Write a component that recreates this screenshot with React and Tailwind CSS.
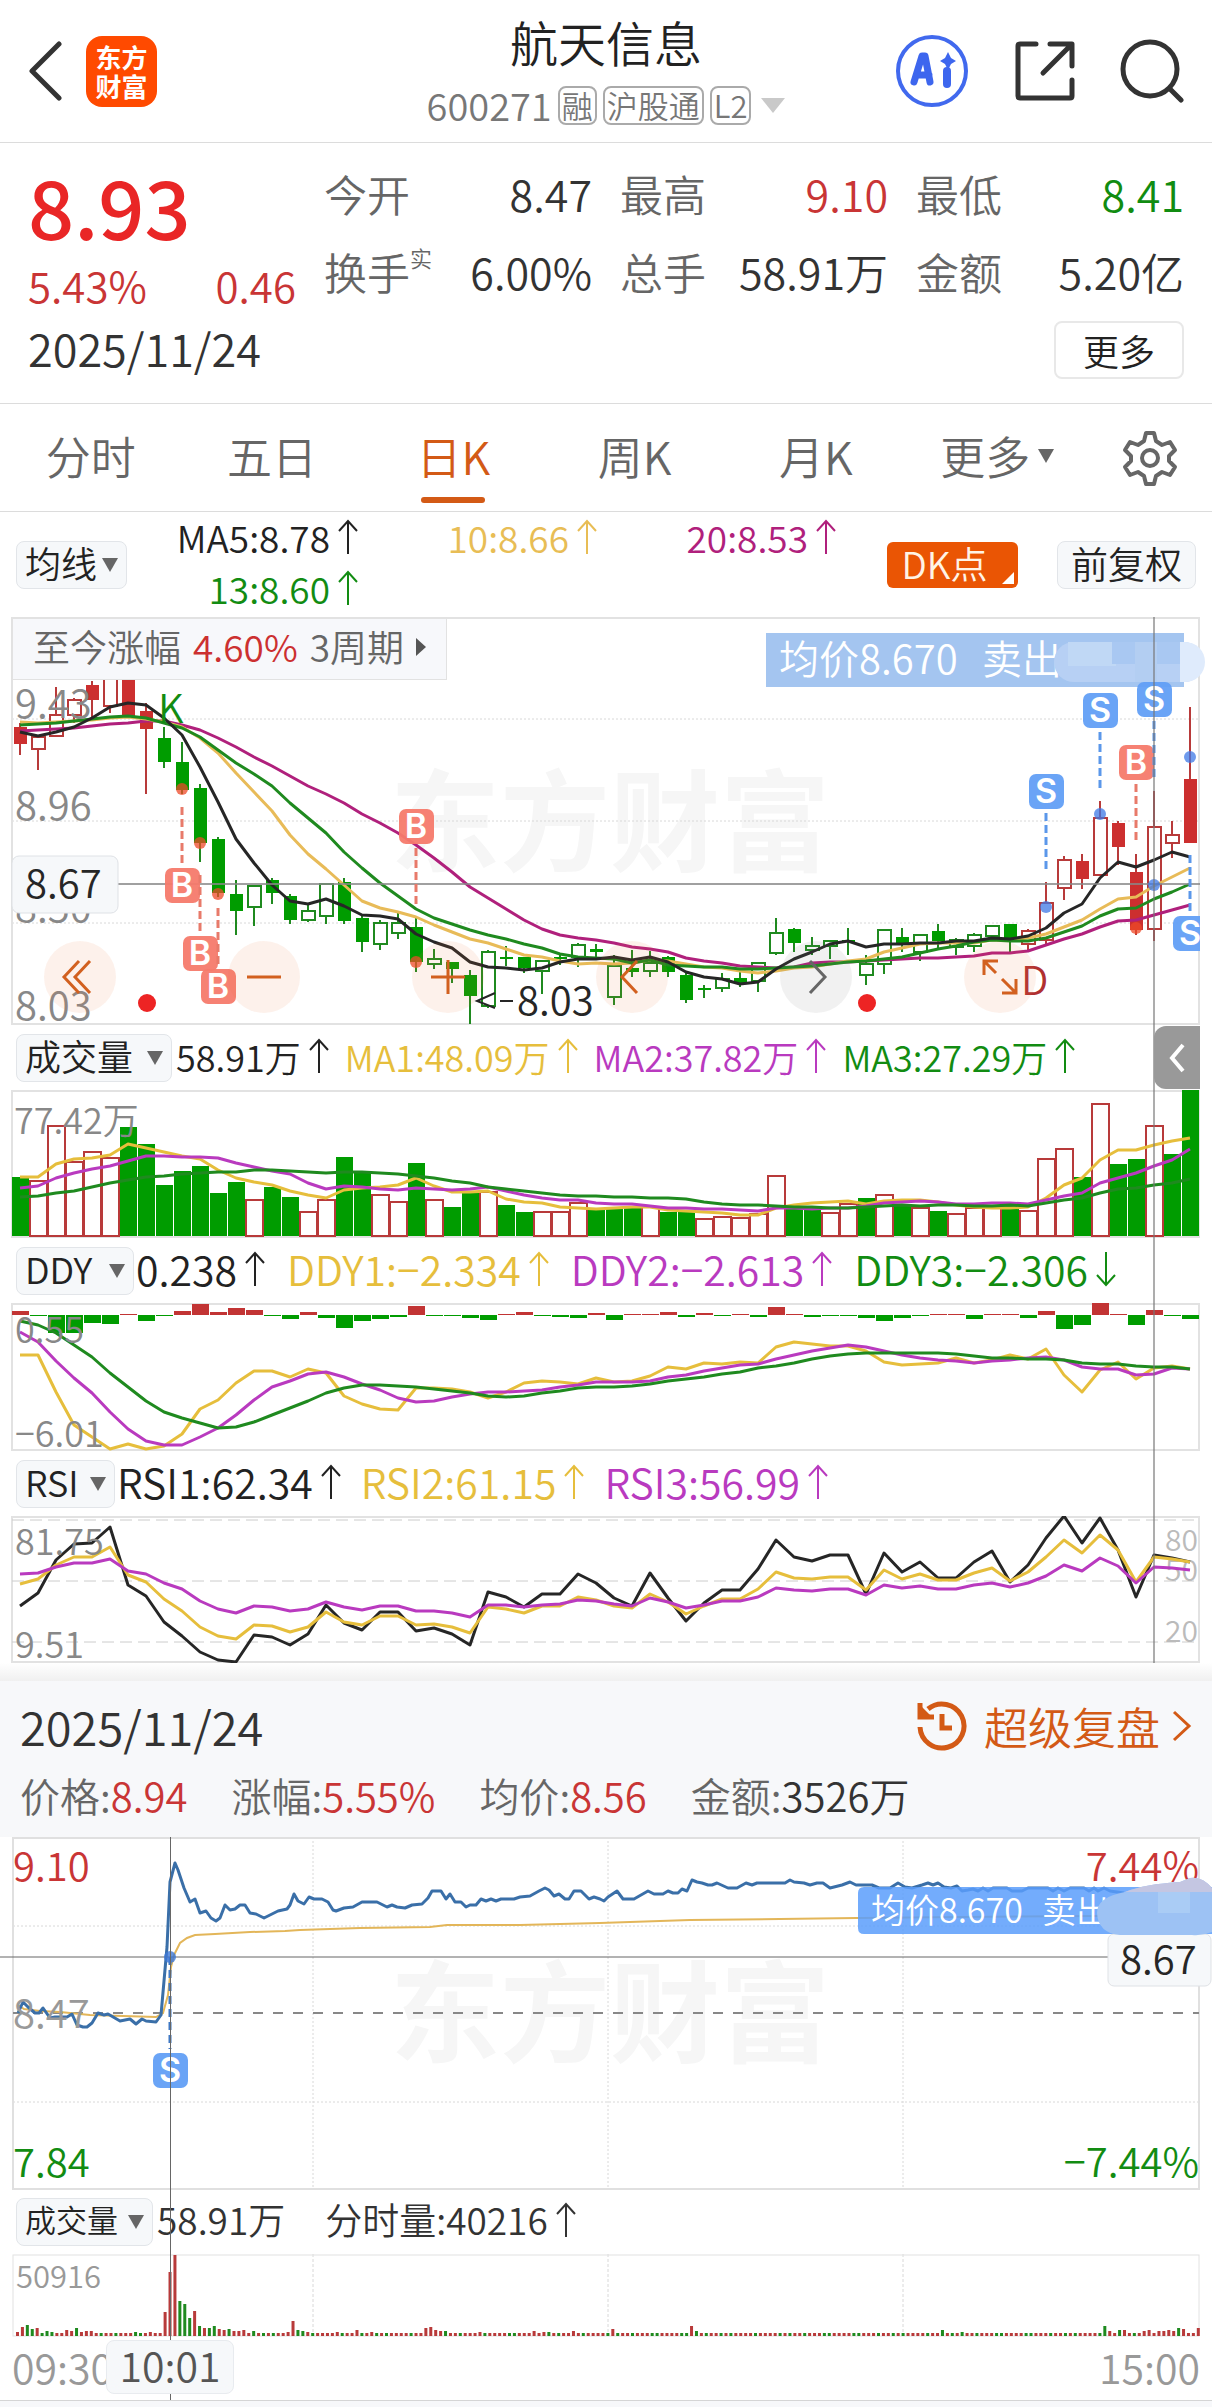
import { useState } from "react";

const RED = "#b83a3a";
const SOLID_RED = "#cc2f2f";
const GREEN = "#009c00";
const LINE_GREEN = "#1f8a1f";
const YELLOW = "#e6be3c";
const MAGENTA = "#b93abf";
const INK = "#262626";

// [type, high, bodyTop, bodyBottom, low] - R/G are filled, r/g are hollow
const candles = [
  ["R", 106, 110, 127, 138], ["r", 118, 120, 132, 153], ["r", 70, 98, 119, 119],
  ["r", 81, 83, 98, 106], ["R", 64, 68, 83, 100], ["r", 62, 62, 89, 96],
  ["R", 62, 62, 100, 100], ["R", 86, 94, 112, 177], ["G", 110, 121, 145, 151],
  ["G", 125, 145, 173, 177], ["G", 167, 171, 226, 245], ["G", 220, 222, 276, 280],
  ["G", 263, 277, 294, 318], ["g", 268, 269, 290, 309], ["G", 261, 263, 276, 287],
  ["G", 277, 279, 303, 307], ["g", 286, 294, 303, 305], ["g", 267, 267, 299, 307],
  ["G", 261, 265, 304, 307], ["G", 299, 301, 325, 335], ["g", 303, 306, 327, 333],
  ["g", 296, 306, 316, 322], ["G", 301, 310, 345, 355], ["g", 332, 342, 347, 352],
  ["G", 345, 345, 352, 366], ["G", 353, 358, 379, 407], ["g", 333, 335, 389, 391],
  ["G", 329, 340, 342, 349], ["G", 340, 340, 351, 356], ["g", 343, 344, 354, 377],
  ["G", 337, 340, 342, 348], ["g", 326, 328, 340, 350], ["G", 327, 332, 335, 340],
  ["g", 338, 349, 380, 388], ["G", 333, 351, 355, 360], ["g", 334, 346, 354, 360],
  ["G", 339, 340, 355, 360], ["G", 356, 358, 383, 386], ["G", 368, 371, 373, 381],
  ["g", 356, 362, 371, 375], ["G", 351, 361, 366, 370], ["g", 345, 346, 364, 375],
  ["g", 301, 316, 336, 338], ["G", 311, 312, 326, 335], ["g", 320, 329, 333, 338],
  ["g", 323, 324, 329, 342], ["G", 311, 323, 325, 338], ["g", 338, 347, 358, 368],
  ["g", 313, 313, 347, 357], ["G", 311, 320, 326, 335], ["g", 318, 318, 335, 344],
  ["G", 307, 314, 324, 332], ["g", 321, 323, 330, 338], ["g", 316, 318, 329, 335],
  ["g", 309, 309, 319, 319], ["G", 307, 307, 323, 337], ["r", 312, 314, 327, 333],
  ["r", 265, 286, 323, 327], ["r", 239, 243, 271, 283], ["R", 237, 244, 262, 272],
  ["r", 184, 201, 258, 258], ["R", 204, 206, 230, 248], ["R", 237, 255, 313, 318],
  ["r", 174, 210, 312, 324], ["r", 204, 218, 226, 241], ["R", 90, 162, 226, 226],
];

const ma5 = [115, 119, 115, 110, 101, 90, 86, 88, 101, 118, 150, 185, 222, 246, 268, 284, 287, 282, 289, 298, 299, 302, 317, 325, 331, 345, 350, 351, 353, 351, 345, 342, 342, 340, 343, 340, 345, 355, 360, 362, 367, 365, 352, 342, 335, 327, 324, 330, 327, 327, 326, 326, 324, 324, 321, 322, 319, 311, 296, 287, 261, 245, 250, 243, 235, 240];
const ma10 = [105, 106, 105, 104, 103, 101, 100, 102, 105, 110, 121, 136, 156, 175, 194, 218, 237, 252, 268, 284, 291, 295, 300, 308, 315, 322, 326, 332, 338, 340, 344, 347, 346, 347, 346, 343, 344, 347, 350, 351, 354, 356, 354, 351, 350, 347, 344, 342, 335, 331, 327, 326, 326, 326, 323, 323, 321, 317, 310, 303, 292, 282, 280, 269, 260, 251];
const ma13 = [108, 107, 106, 104, 102, 100, 99, 101, 106, 111, 120, 133, 146, 157, 169, 186, 201, 216, 235, 251, 266, 279, 292, 301, 307, 313, 318, 322, 327, 331, 337, 340, 341, 342, 346, 343, 348, 349, 350, 350, 352, 352, 351, 350, 349, 347, 345, 344, 342, 340, 336, 332, 329, 325, 323, 324, 324, 321, 315, 309, 299, 292, 291, 282, 275, 267];
const ma20 = [114, 113, 112, 111, 109, 107, 106, 104, 104, 108, 113, 121, 130, 140, 149, 159, 169, 177, 186, 197, 206, 216, 228, 241, 255, 270, 281, 292, 303, 312, 318, 321, 323, 326, 330, 332, 335, 341, 344, 346, 349, 350, 351, 350, 346, 345, 345, 344, 343, 342, 341, 341, 340, 339, 336, 336, 334, 328, 322, 317, 310, 304, 303, 298, 293, 288];

const volumes = [
  ["G", 87], ["r", 90], ["r", 35], ["r", 71], ["r", 61], ["r", 67], ["G", 37], ["G", 54], ["G", 95], ["G", 81], ["G", 76],
  ["G", 103], ["G", 92], ["r", 109], ["G", 97], ["G", 107], ["r", 121], ["r", 109], ["G", 67], ["G", 83], ["r", 104], ["r", 111],
  ["G", 73], ["r", 109], ["G", 117], ["G", 103], ["r", 101], ["G", 115], ["G", 122], ["r", 121], ["r", 121], ["r", 112], ["G", 118],
  ["G", 118], ["G", 117], ["r", 116], ["G", 122], ["G", 121], ["r", 128], ["r", 126], ["r", 127], ["r", 123], ["r", 85], ["G", 119],
  ["G", 118], ["r", 122], ["r", 113], ["G", 108], ["r", 104], ["G", 115], ["r", 117], ["G", 121], ["r", 123], ["r", 117], ["r", 117],
  ["G", 112], ["r", 120], ["r", 68], ["r", 58], ["G", 87], ["r", 13], ["G", 74], ["G", 69], ["r", 35], ["G", 64], ["G", 0],
];
const volMa1 = [87, 87, 74, 69, 68, 65, 54, 58, 62, 66, 69, 80, 88, 92, 95, 101, 105, 108, 100, 98, 97, 95, 88, 96, 102, 102, 101, 109, 112, 113, 117, 118, 119, 118, 117, 117, 120, 121, 122, 123, 125, 125, 118, 115, 113, 112, 111, 114, 111, 110, 110, 112, 115, 117, 118, 118, 117, 108, 95, 88, 70, 60, 60, 55, 51, 48];
const volMa2 = [98, 96, 88, 83, 79, 76, 71, 66, 66, 67, 67, 68, 73, 77, 81, 84, 93, 99, 96, 97, 99, 100, 98, 99, 100, 99, 97, 101, 105, 108, 110, 110, 113, 114, 114, 116, 118, 118, 119, 119, 120, 121, 118, 118, 119, 118, 118, 116, 113, 112, 111, 112, 114, 114, 113, 113, 114, 110, 106, 103, 93, 88, 83, 76, 70, 59];
const volMa3 = [107, 106, 103, 101, 97, 93, 90, 87, 86, 84, 83, 82, 82, 80, 80, 81, 82, 83, 82, 82, 83, 84, 86, 88, 91, 93, 97, 99, 101, 103, 105, 106, 106, 107, 107, 108, 108, 109, 112, 114, 115, 115, 116, 117, 117, 118, 118, 117, 116, 115, 116, 115, 115, 116, 116, 115, 116, 113, 110, 108, 103, 99, 98, 95, 93, 89];

const ddyBars = [4, -1, -18, -18, -8, -9, 1, -6, -1, 4, 11, 3, 7, 5, -1, -4, 3, -3, -13, -6, -4, -2, 9, -1, -1, -3, -5, 1, 3, -1, -2, -3, 2, -5, 1, 1, 3, -2, 2, -1, 1, -2, 8, 1, -2, -1, -1, -3, -6, -3, -1, 1, 1, -4, 1, 1, -3, 4, -14, -10, 12, 1, -10, 5, -1, -4];
const ddy1 = [52, 52, 89, 122, 134, 146, 141, 146, 143, 131, 106, 97, 80, 68, 68, 74, 66, 70, 93, 101, 106, 107, 85, 85, 86, 89, 95, 89, 80, 78, 79, 81, 75, 79, 78, 73, 64, 66, 60, 61, 59, 60, 44, 39, 41, 43, 43, 48, 59, 62, 61, 60, 55, 60, 57, 52, 56, 46, 72, 89, 67, 59, 76, 65, 63, 66];
const ddy2 = [29, 39, 58, 75, 90, 109, 126, 138, 142, 142, 134, 125, 112, 97, 84, 78, 71, 69, 74, 81, 87, 95, 99, 98, 94, 91, 89, 89, 88, 87, 84, 82, 79, 79, 79, 78, 74, 72, 68, 65, 62, 61, 56, 52, 48, 45, 42, 44, 48, 52, 55, 57, 58, 60, 58, 57, 55, 54, 57, 64, 66, 66, 72, 71, 65, 66];
const ddy3 = [18, 22, 30, 42, 54, 70, 84, 98, 109, 115, 120, 125, 124, 119, 112, 105, 98, 90, 85, 82, 82, 83, 84, 86, 88, 90, 93, 94, 93, 90, 88, 85, 84, 84, 83, 81, 78, 76, 74, 71, 69, 65, 63, 60, 56, 53, 51, 50, 50, 50, 50, 50, 51, 53, 55, 55, 56, 56, 57, 60, 61, 61, 63, 64, 64, 66];

const rsi1 = [90, 77, 44, 28, 27, 11, 69, 80, 106, 120, 136, 144, 146, 119, 121, 129, 118, 89, 107, 114, 96, 96, 115, 112, 118, 129, 76, 81, 91, 78, 78, 58, 67, 82, 90, 57, 82, 105, 87, 74, 74, 53, 24, 41, 45, 39, 39, 78, 37, 56, 46, 62, 62, 46, 35, 66, 49, 22, 0, 27, 2, 34, 81, 39, 42, 46];
const rsi2 = [68, 63, 49, 41, 41, 31, 59, 66, 83, 95, 111, 120, 123, 109, 110, 116, 111, 96, 106, 109, 100, 100, 109, 108, 111, 117, 91, 93, 97, 90, 90, 81, 84, 90, 92, 78, 86, 98, 90, 83, 83, 73, 56, 62, 63, 61, 61, 74, 54, 63, 58, 64, 64, 57, 52, 65, 56, 41, 24, 37, 19, 34, 66, 41, 43, 46];
const rsi3 = [58, 57, 51, 47, 47, 43, 55, 58, 67, 73, 85, 93, 97, 90, 91, 95, 93, 86, 91, 94, 90, 90, 95, 95, 97, 101, 89, 89, 91, 89, 88, 84, 85, 88, 90, 82, 86, 92, 89, 85, 85, 81, 72, 74, 75, 73, 73, 79, 69, 72, 70, 73, 73, 69, 67, 71, 67, 60, 49, 55, 42, 50, 67, 51, 52, 54];

const pricePath = "18,176 23,165 28,170 35,176 39,176 43,171 50,181 55,180 67,180 72,177 77,188 83,190 87,190 92,186 98,176 104,178 108,177 120,184 130,182 136,187 142,182 146,184 156,185 161,178 167,110 170,45 175,26 178,33 184,51 190,65 195,62 200,76 206,74 211,81 216,84 220,81 225,68 230,73 235,72 240,68 245,68 250,76 256,77 264,81 270,78 278,74 287,72 290,68 294,57 298,64 304,67 309,60 314,62 322,62 328,65 333,73 336,74 344,71 353,70 362,65 377,65 387,70 392,68 397,70 405,71 412,68 422,67 428,61 432,54 441,54 446,62 450,57 455,65 461,65 466,70 470,68 476,68 481,62 486,64 491,62 496,64 501,62 514,62 520,60 530,59 539,54 545,51 549,53 554,59 559,57 565,62 569,62 574,54 581,54 589,62 594,60 600,62 604,64 608,60 617,54 623,62 634,62 648,54 654,57 663,57 668,54 673,56 678,56 682,52 687,54 692,43 697,45 702,46 708,48 712,48 717,46 728,51 737,51 746,46 752,48 757,46 785,46 790,43 794,45 804,46 810,48 817,46 823,46 830,51 842,48 850,45 856,48 872,48 879,51 890,51 898,46 905,50 912,51 922,48 928,46 933,48 938,46 944,50 951,51 957,49 962,54 968,53 973,52 978,54 983,51 988,54 993,51 1007,51 1012,54 1022,54 1028,51 1048,51 1053,54 1058,51 1064,54 1070,51 1084,51 1089,54 1094,51 1098,54 1104,51 1110,54 1124,56";
const avgPath = "18,168 24,172 40,174 60,175 90,178 156,180 163,176 168,158 171,130 174,118 180,106 187,101 195,98 215,97 250,95 285,94 300,93 360,91 430,90 447,88 520,88 600,86 690,83 780,82 857,81 960,80 1098,79";

// minute volume: quiet minutes are 3px high, the rest are listed here
const minuteSpikes = {
  0: 4, 1: 9, 2: -11, 3: -7, 4: 8, 6: -5, 7: -4, 10: 6, 11: 5, 12: -8, 13: 4, 14: 5, 15: 5, 24: -4, 27: 4,
  30: 24, 31: 64, 32: 81, 33: -35, 34: -32, 35: -18, 36: 25, 37: -10, 38: 8, 39: -8, 40: -10, 41: 7, 42: 6, 43: -7,
  44: 5, 45: 5, 46: 6, 48: -5, 55: 4, 56: 15, 57: -6, 58: -5, 59: 4, 65: 4, 69: 6, 72: 4, 83: 8, 84: 9, 85: 6, 86: 5,
  87: -5, 94: 4, 105: 5, 107: 4, 108: -4, 113: 5, 121: 7, 137: 10, 138: -5, 188: -6, 192: -4, 221: -10, 222: 5, 224: -6,
  225: 6, 229: 5, 230: 6, 232: 5, 233: 5, 234: 6, 235: 5, 236: -8, 237: 7, 240: 8,
};

const trades = [
  { side: "B", x: 182, y: 268, from: 190, to: 246, dot: 172 },
  { side: "B", x: 200, y: 336, from: 258, to: 318, dot: 226 },
  { side: "B", x: 218, y: 369, from: 291, to: 350, dot: 277 },
  { side: "B", x: 416, y: 209, from: 231, to: 289, dot: 345 },
  { side: "B", x: 1136, y: 145, from: 167, to: 225, dot: 311 },
  { side: "S", x: 1046, y: 174, from: 196, to: 254, dot: 290 },
  { side: "S", x: 1100, y: 93, from: 115, to: 173, dot: 197 },
  { side: "S", x: 1154, y: 82, from: 104, to: 162, dot: 268 },
  { side: "S", x: 1190, y: 316, from: 238, to: 296, dot: 140 },
];

const barX = (i) => 20 + i * 18;
const toPoints = (values) => values.map((y, i) => `${barX(i)},${y}`).join(" ");

const Line = ({ values, color }) => (
  <polyline points={toPoints(values)} fill="none" stroke={color} strokeWidth="3" strokeLinejoin="round" />
);

const Up = ({ down }) => (
  <svg viewBox="0 0 20 36" className="h-9 w-5 shrink-0" fill="none" stroke="currentColor" strokeWidth="2">
    {down ? <path d="M10 1v33M1 24l9 10 9-10" /> : <path d="M10 35V2M1 12l9-10 9 10" />}
  </svg>
);

const Watermark = ({ y }) => (
  <text x="390" y={y} fontSize="110" fontWeight="700" fill="#f6f6f6">东方财富</text>
);

const TradeMark = ({ side, x, y }) => (
  <g>
    <rect x={x - 17} y={y - 17} width="35" height="35" rx="7" fill={side === "B" ? "#f67a6b" : "#629ff6"} fillOpacity="0.95" />
    <text x={x} y={y + 12} textAnchor="middle" fontFamily="Inter" fontSize="34" fontWeight="600" fill="#fff">{side}</text>
  </g>
);

const Picker = ({ label, options, className }) => (
  <div className={`relative h-12 shrink-0 rounded-lg border border-[#e2e5e9] bg-[#f6f8fa] text-[#222] ${className}`}>
    <select aria-label={label} className="-mt-2 block h-14 w-full appearance-none bg-transparent pl-2 outline-none">
      {options.map((option) => (
        <option key={option}>{option}</option>
      ))}
    </select>
    <svg viewBox="0 0 16 14" className="pointer-events-none absolute top-4 right-2 h-[14px] w-4">
      <path d="M0 0h16L8 14z" fill="#666" />
    </svg>
  </div>
);

const Reading = ({ color, down, children }) => (
  <span className={`flex items-center gap-2 pb-1 ${color}`}>
    {children}
    <Up down={down} />
  </span>
);

const Header = () => (
  <header className="grid h-[143px] grid-cols-[1fr_auto_1fr] items-center border-b border-[#dcdcdc] px-7">
    <div className="flex items-center gap-6">
      <button aria-label="返回">
        <svg viewBox="0 0 34 60" className="h-[60px] w-[34px]" fill="none" stroke="#333" strokeWidth="5">
          <path d="M31 3L4 30l27 27" strokeLinecap="round" strokeLinejoin="round" />
        </svg>
      </button>
      <a href="#home" className="grid size-[71px] place-content-center rounded-2xl bg-[#ff4a00] text-center text-[26px] leading-[29px] font-bold text-white">
        <span>东方</span>
        <span>财富</span>
      </a>
    </div>
    <div className="flex flex-col items-center">
      <h1 className="text-[48px] leading-[52px] text-[#222]">航天信息</h1>
      <div className="mt-4 flex items-center gap-[6px] text-[#777]">
        <span className="text-[38px] leading-[44px]">600271</span>
        {["融", "沪股通", "L2"].map((tag) => (
          <span key={tag} className="h-[39px] rounded-lg border-2 border-[#aaa] px-[2px] text-[31px] leading-[34px]">{tag}</span>
        ))}
        <svg viewBox="0 0 24 15" className="ml-1 h-[15px] w-6"><path d="M0 0h24L12 15z" fill="#c9c9c9" /></svg>
      </div>
    </div>
    <div className="flex items-center justify-end gap-11">
      <button aria-label="AI">
        <svg viewBox="0 0 74 74" className="size-[74px]">
          <circle cx="36" cy="37" r="34" fill="none" stroke="#4169ee" strokeWidth="4" />
          <g fill="none" stroke="#3d66ee" strokeLinecap="round" strokeLinejoin="round">
            <path d="M18 48l8-26h3l5 26M21 41h12" strokeWidth="7" />
            <path d="M51 37v13" strokeWidth="8" />
          </g>
          <path d="M52 18l3 6 5 3-5 3-3 6-3-6-5-3 5-3z" fill="#3d66ee" />
        </svg>
      </button>
      <button aria-label="分享">
        <svg viewBox="0 0 62 62" className="size-[62px]" fill="none" stroke="#333" strokeWidth="5" strokeLinecap="round" strokeLinejoin="round">
          <path d="M22 4H6q-2 0-2 2v50q0 2 2 2h50q2 0 2-2V40" />
          <path d="M36 4h22v22M57 5L29 33" />
        </svg>
      </button>
      <button aria-label="搜索">
        <svg viewBox="0 0 64 64" className="size-16" fill="none" stroke="#333" strokeWidth="5" strokeLinecap="round">
          <circle cx="30" cy="30" r="27" />
          <path d="M50 50l11 11" />
        </svg>
      </button>
    </div>
  </header>
);

const quoteCells = [
  ["今开", "8.47", "text-[#333]"],
  ["最高", "9.10", "text-[#c93535]"],
  ["最低", "8.41", "text-[#118c11]"],
  ["换手", "6.00%", "text-[#333]"],
  ["总手", "58.91万", "text-[#333]"],
  ["金额", "5.20亿", "text-[#333]"],
];

const Quote = () => (
  <section className="border-b border-[#dcdcdc] px-7 pt-[22px] pb-6">
    <div className="grid grid-cols-4 gap-7">
      <div className="text-[#c93535]">
        <p className="text-[81px] leading-[80px] font-medium text-[#e92626]">8.93</p>
        <p className="mt-4 flex justify-between text-[42px] leading-[48px]">
          <span>5.43%</span>
          <span>0.46</span>
        </p>
      </div>
      <dl className="col-span-3 grid grid-cols-3 content-start gap-x-7 gap-y-[22px] text-[43px] leading-[56px]">
        {quoteCells.map(([name, value, color]) => (
          <div key={name} className="flex justify-between whitespace-nowrap">
            <dt className="flex text-[#666]">
              {name}
              {name === "换手" && <sup className="top-0 text-[22px] leading-[28px]">实</sup>}
            </dt>
            <dd className={color}>{value}</dd>
          </div>
        ))}
      </dl>
    </div>
    <div className="mt-3 flex h-[58px] items-center justify-between">
      <time className="pb-1 text-[45px] text-[#333]">2025/11/24</time>
      <button className="h-[58px] w-[130px] rounded-lg border-2 border-[#e8e8e8] pb-1 text-[36px] text-[#222]">更多</button>
    </div>
  </section>
);

const tabs = ["分时", "五日", "日K", "周K", "月K", "更多"];

const Tabs = () => {
  const [active, setActive] = useState("日K");
  return (
    <nav className="flex h-[108px] border-b border-[#dcdcdc] text-[45px]">
      {tabs.map((tab) => (
        <button
          key={tab}
          onClick={() => setActive(tab)}
          className={`relative flex flex-1 items-center justify-center gap-2 pb-1 ${tab === active ? "text-[#d35a16]" : "text-[#666]"}`}
        >
          {tab}
          {tab === "更多" && (
            <svg viewBox="0 0 16 14" className="h-[14px] w-4"><path d="M0 0h16L8 14z" fill="#666" /></svg>
          )}
          {tab === active && <span className="absolute bottom-2 h-[6px] w-16 rounded-full bg-[#d35a16]" />}
        </button>
      ))}
      <button aria-label="设置" className="flex w-[124px] items-center justify-center">
        <svg viewBox="0 0 56 56" className="size-14" fill="none" stroke="#666" strokeWidth="4" strokeLinejoin="round">
          <path d="M24 3h8l2 8 6 4 8-3 5 8-6 6v5l6 6-5 8-8-3-6 4-2 8h-8l-2-8-6-4-8 3-5-8 6-6v-5l-6-6 5-8 8 3 6-4z" />
          <circle cx="28" cy="28" r="8" />
        </svg>
      </button>
    </nav>
  );
};

const Averages = () => (
  <div className="flex h-[105px] items-center pr-4 pl-4 text-[37px]">
    <Picker label="均线" options={["均线", "BOLL"]} className="w-[111px] text-[36px]" />
    <div className="grid flex-1 grid-cols-[auto_239px_239px] justify-end justify-items-end leading-[47px]">
      <Reading color="text-[#222]">MA5:8.78</Reading>
      <Reading color="text-[#e8bd55]">10:8.66</Reading>
      <Reading color="text-[#b0207c]">20:8.53</Reading>
      <Reading color="text-[#128c12]">13:8.60</Reading>
    </div>
    <button className="relative ml-[51px] h-[46px] w-[131px] rounded-md bg-[#ea5504] pr-4 pb-1 leading-[38px] text-[#fff3e6]">
      DK点
      <svg viewBox="0 0 12 12" className="absolute right-1 bottom-1 size-3"><path d="M12 0v12H0z" fill="#fff" /></svg>
    </button>
    <button className="ml-[39px] h-12 w-[139px] rounded-lg border border-[#e2e5e9] bg-[#f6f8fa] pb-1 leading-[40px] text-[#222]">前复权</button>
  </div>
);

const chartTools = [
  ["后退", "bg-[#f0743a]/10", "M35 20L20 36l15 16M46 20L31 36l15 16"],
  ["缩小", "bg-[#f0743a]/10", "M19 36h34"],
  ["放大", "bg-[#f0743a]/10", "M19 36h34M36 19v34"],
  ["左移", "bg-[#f0743a]/10", "M41 20L26 36l15 16"],
  ["右移", "bg-[#777]/10 text-[#666]", "M30 20l15 16-15 16"],
  ["全屏", "bg-[#f0743a]/10", "M20 34V20h14M20 20l12 12M52 38v14H38M52 52L38 38"],
];

const KChart = () => (
  <div className="relative">
    <svg viewBox="0 0 1212 408" className="block w-full">
      <defs>
        <clipPath id="kArea"><rect x="12" y="0" width="1188" height="408" /></clipPath>
      </defs>
      <Watermark y="246" />
      <g stroke="#d8d8d8" strokeDasharray="2 2">
        <path d="M12 102H1200M12 204H1200M12 306H1200" />
      </g>
      <rect x="12" y="1" width="1187" height="406" fill="none" stroke="#e2e2e2" strokeWidth="2" />
      {candles.map(([type, high, top, bottom, low], i) => {
        const hollow = type === "r" || type === "g";
        const red = type === "r" || type === "R";
        const stroke = red ? RED : LINE_GREEN;
        return (
          <g key={i}>
            <path d={`M${barX(i)} ${high}V${low}`} stroke={stroke} strokeWidth="2" />
            <rect
              x={barX(i) - 6}
              y={top}
              width="13"
              height={bottom - top}
              fill={hollow ? "#fff" : red ? SOLID_RED : GREEN}
              stroke={hollow ? stroke : "none"}
              strokeWidth="2"
            />
          </g>
        );
      })}
      <Line values={ma20} color="#b0207c" />
      <Line values={ma10} color="#e8bb58" />
      <Line values={ma13} color={LINE_GREEN} />
      <Line values={ma5} color={INK} />
      <path d="M118 267H1200" stroke="#888" strokeOpacity="0.8" strokeWidth="2" />
      <circle cx="147" cy="386" r="9" fill="#ed2424" />
      <circle cx="867" cy="386" r="9" fill="#ed2424" />
      <g fontSize="40" fill="#888">
        <text x="15" y="101">9.43</text>
        <text x="15" y="203">8.96</text>
        <text x="15" y="305">8.50</text>
        <text x="15" y="403">8.03</text>
      </g>
      <g fontSize="40">
        <text x="158" y="106" fill="#128c12">K</text>
        <text x="517" y="398" fill={INK}>8.03</text>
        <text x="1021" y="378" fill="#b03030">D</text>
      </g>
      <path d="M495 376l-18 8 18 7M500 384h13" fill="none" stroke={INK} strokeWidth="2" />
      <rect x="12" y="239" width="106" height="57" rx="7" fill="#f6f8fa" stroke="#dfe2e6" />
      <text x="25" y="281" fontSize="40" fill={INK}>8.67</text>
      <rect x="766" y="16" width="418" height="54" fill="#a4c5f0" />
      <text x="779" y="57" fontSize="40" fill="#fff">均价8.670</text>
      <text x="982" y="57" fontSize="40" fill="#fff">卖出</text>
      <rect x="1054" y="25" width="150" height="40" rx="20" fill="#b7d0f4" />
      <path d="M1068 25h48v24h-48z" fill="#c0d8f5" />
      <path d="M1112 25h68v22h-68z" fill="#a9c8f2" />
      <path d="M1135 25h22v40h-22z" fill="#b3cef2" />
      <path d="M1180 25h5a20 20 0 0 1 0 40h-5z" fill="#dfebfc" />
      <g clipPath="url(#kArea)">
        {trades.map(({ side, x, y, from, to, dot }) => (
          <g key={`${side}${x}`}>
            <path d={`M${x} ${from}V${to}`} stroke={side === "B" ? "#e87a6a" : "#5b97ea"} strokeWidth="3" strokeDasharray="8 4" />
            <circle cx={x} cy={dot} r="6" fill={side === "B" ? "#ee4a28" : "#3d78e6"} fillOpacity="0.75" />
            <TradeMark side={side} x={x} y={y} />
          </g>
        ))}
      </g>
    </svg>
    <button className="absolute top-px left-3 flex h-[62px] items-center gap-3 border border-[#e2e2e2] bg-[#f7f8fb] px-5 pb-1 text-[37px] text-[#666]">
      <span>至今涨幅</span>
      <span className="text-[#cc3030]">4.60%</span>
      <span>3周期</span>
      <svg viewBox="0 0 10 18" className="h-[18px] w-[10px]"><path d="M0 0l10 9-10 9z" fill="#555" /></svg>
    </button>
    <div className="absolute top-[324px] left-11 flex gap-28 text-[#d2601f]">
      {chartTools.map(([name, color, d]) => (
        <button key={name} aria-label={name} className={`size-[72px] rounded-full ${color}`}>
          <svg viewBox="0 0 72 72" fill="none" stroke="currentColor" strokeWidth="3"><path d={d} /></svg>
        </button>
      ))}
    </div>
  </div>
);

const VolumeChart = () => (
  <svg viewBox="0 0 1212 148" className="block w-full">
    <rect x="12" y="1" width="1187" height="146" fill="none" stroke="#e2e2e2" strokeWidth="2" />
    {volumes.map(([type, top], i) =>
      type === "G" ? (
        <rect key={i} x={barX(i) - 8} y={top} width="17" height={146 - top} fill={GREEN} />
      ) : (
        <rect key={i} x={barX(i) - 8} y={top + 1} width="17" height={145 - top} fill="#fff" stroke={RED} strokeWidth="2" />
      )
    )}
    <Line values={volMa1} color={YELLOW} />
    <Line values={volMa2} color={MAGENTA} />
    <Line values={volMa3} color={LINE_GREEN} />
    <text x="14" y="44" fontSize="36" fill="#888">77.42万</text>
  </svg>
);

const DdyChart = () => (
  <svg viewBox="0 0 1212 148" className="block w-full">
    <rect x="12" y="1" width="1187" height="146" fill="none" stroke="#e2e2e2" strokeWidth="2" />
    {ddyBars.map((v, i) => (
      <rect key={i} x={barX(i) - 8} y={v > 0 ? 12 - v : 12} width="17" height={Math.abs(v)} fill={v > 0 ? "#c23434" : GREEN} />
    ))}
    <Line values={ddy1} color={YELLOW} />
    <Line values={ddy2} color={MAGENTA} />
    <Line values={ddy3} color={LINE_GREEN} />
    <g fontSize="36" fill="#888">
      <text x="15" y="40">0.55</text>
      <text x="15" y="144">−6.01</text>
    </g>
  </svg>
);

const RsiChart = () => (
  <svg viewBox="0 0 1212 147" className="block w-full">
    <rect x="12" y="1" width="1187" height="145" fill="none" stroke="#e2e2e2" strokeWidth="2" />
    <path d="M12 4H1199M12 65H1199M12 126H1199" stroke="#ccc" strokeDasharray="12 6" />
    <g fontSize="30" fill="#bbb" textAnchor="end">
      <text x="1198" y="35">80</text>
      <text x="1198" y="65">50</text>
      <text x="1198" y="126">20</text>
    </g>
    <Line values={rsi1} color={INK} />
    <Line values={rsi2} color={YELLOW} />
    <Line values={rsi3} color={MAGENTA} />
    <g fontSize="36" fill="#888">
      <text x="15" y="39">81.75</text>
      <text x="15" y="142">9.51</text>
    </g>
  </svg>
);

const MinuteChart = () => (
  <svg viewBox="0 0 1212 353" className="block w-full">
    <Watermark y="217" />
    <path d="M13 89H1199M13 265H1199M313 0V352M608 0V352M903 0V352" stroke="#d8d8d8" strokeDasharray="2 2" />
    <rect x="13" y="1" width="1186" height="351" fill="none" stroke="#e0e0e0" strokeWidth="2" />
    <path d="M13 176H1199" stroke="#888" strokeWidth="2" strokeDasharray="10 10" />
    <polyline points={avgPath} fill="none" stroke="#e3b659" strokeWidth="2" />
    <polyline points={pricePath} fill="none" stroke="#3a6fa8" strokeWidth="3" strokeLinejoin="round" />
    <path d="M0 120H1108" stroke="#666" />
    <path d="M170 120V212" stroke="#3f78c4" strokeWidth="3" strokeDasharray="8 5" />
    <circle cx="170" cy="120" r="6" fill="#3d78d6" fillOpacity="0.8" />
    <TradeMark side="S" x={170} y={233} />
    <g fontSize="40">
      <text x="13" y="44" fill="#c93535">9.10</text>
      <text x="13" y="191" fill="#999">8.47</text>
      <text x="13" y="340" fill="#128c12">7.84</text>
      <text x="1199" y="44" textAnchor="end" fill="#c93535">7.44%</text>
      <text x="1199" y="340" textAnchor="end" fill="#128c12">−7.44%</text>
    </g>
    <path d="M864 50H1212V97H864q-6 0-6-6V56q0-6 6-6z" fill="#5b9dfb" fillOpacity="0.85" />
    <text x="871" y="86" fontSize="34" fill="#fff">均价8.670</text>
    <text x="1042" y="86" fontSize="34" fill="#fff">卖出</text>
    <rect x="1108" y="97" width="103" height="52" rx="6" fill="#f6f8fa" stroke="#dfe2e6" />
    <text x="1120" y="137" fontSize="40" fill={INK}>8.67</text>
    <path d="M1125 55q20-8 55-10l10-4q12-2 22 10v44q-10 4-20 3H1120q-22-2-23-22 0-16 28-21z" fill="#9dc2f4" />
    <path d="M1125 55q20-8 55-10l10-4q12-2 22 10v4z" fill="#c4c6e2" />
    <path d="M1158 55h32v21h-32z" fill="#aaccf5" />
  </svg>
);

const MinuteVolume = () => (
  <svg viewBox="0 0 1212 83" className="block w-full">
    <path d="M313 0V82M608 0V82M903 0V82" stroke="#d8d8d8" strokeDasharray="3 2" />
    <rect x="13" y="1" width="1186" height="81" fill="none" stroke="#e2e2e2" strokeWidth="1" />
    {Array.from({ length: 241 }, (_, i) => {
      const value = minuteSpikes[i] || (i % 5 === 0 || i % 7 === 3 ? -3 : 3);
      const height = Math.abs(value);
      return <rect key={i} x={16 + i * 4.92} y={82 - height} width="3" height={height} fill={value > 0 ? RED : LINE_GREEN} />;
    })}
    <text x="16" y="34" fontSize="31" fill="#999">50916</text>
  </svg>
);

const replayStats = [
  ["价格", "8.94", "text-[#c93535]"],
  ["涨幅", "5.55%", "text-[#c93535]"],
  ["均价", "8.56", "text-[#c93535]"],
  ["金额", "3526万", "text-[#333]"],
];

const Replay = () => (
  <section className="h-[156px] bg-[#f7f8fa] px-5 pt-[14px]">
    <div className="flex h-[62px] items-center justify-between">
      <time className="text-[47px] text-[#333]">2025/11/24</time>
      <a href="#replay" className="flex items-center text-[44px] text-[#d35a16]">
        <svg viewBox="0 0 52 52" className="mr-4 size-[52px]" fill="none" stroke="currentColor" strokeWidth="5">
          <path d="M4 27a22 22 0 1 0 8-18" />
          <path d="M3 4v14h14z" fill="currentColor" stroke="none" />
          <path d="M4 3v14h14M26 14v14h10" />
        </svg>
        超级复盘
        <svg viewBox="0 0 20 32" className="ml-3 h-8 w-5" fill="none" stroke="currentColor" strokeWidth="3">
          <path d="M2 2l15 14L2 30" />
        </svg>
      </a>
    </div>
    <div className="mt-[10px] flex gap-11 text-[40px] leading-[56px]">
      {replayStats.map(([name, value, color]) => (
        <span key={name} className="text-[#666]">
          {name}:<span className={color}>{value}</span>
        </span>
      ))}
    </div>
  </section>
);

const App = () => {
  return (
    <main className="min-w-0 bg-white font-['Noto_Sans_CJK_SC',sans-serif] font-[350] whitespace-nowrap">
      <Header />
      <Quote />
      <Tabs />
      <Averages />
      <section className="relative">
        <KChart />
        <div className="flex h-[65px] items-center gap-4 pl-4 text-[36px]">
          <Picker label="成交量指标" options={["成交量", "成交额"]} className="-mr-3 w-[156px]" />
          <Reading color="text-[#222]">58.91万</Reading>
          <Reading color="text-[#e6be3c]">MA1:48.09万</Reading>
          <Reading color="text-[#b93abf]">MA2:37.82万</Reading>
          <Reading color="text-[#128c12]">MA3:27.29万</Reading>
        </div>
        <VolumeChart />
        <div className="flex h-[65px] items-center gap-[22px] pl-4 text-[41px]">
          <Picker label="副图指标一" options={["DDY", "MACD"]} className="-mr-5 w-[118px] text-[36px]" />
          <Reading color="text-[#222]">0.238</Reading>
          <Reading color="text-[#e6be3c]">DDY1:−2.334</Reading>
          <Reading color="text-[#b93abf]">DDY2:−2.613</Reading>
          <Reading color="text-[#128c12]" down>DDY3:−2.306</Reading>
        </div>
        <DdyChart />
        <div className="flex h-[65px] items-center gap-5 pl-4 text-[41px]">
          <Picker label="副图指标二" options={["RSI", "KDJ"]} className="-mr-[18px] w-[99px] text-[36px]" />
          <Reading color="text-[#222]">RSI1:62.34</Reading>
          <Reading color="text-[#e6be3c]">RSI2:61.15</Reading>
          <Reading color="text-[#b93abf]">RSI3:56.99</Reading>
        </div>
        <RsiChart />
        {/* crosshair */}
        <div className="pointer-events-none absolute inset-y-0 right-[57px] w-0.5 bg-[#777]/60" />
        <button aria-label="收起" className="absolute top-[409px] right-3 flex h-[63px] w-[46px] items-center justify-center rounded-l-xl bg-[#999]">
          <svg viewBox="0 0 16 30" className="h-[30px] w-4" fill="none" stroke="#fff" strokeWidth="4"><path d="M14 2L3 15l11 13" /></svg>
        </button>
      </section>
      <div className="h-[18px] bg-linear-to-b from-white to-[#f0f0f0]" />
      <Replay />
      <section className="relative">
        <MinuteChart />
        <div className="flex h-16 items-center pl-4 text-[37px] text-[#333]">
          <Picker label="分时指标" options={["成交量", "成交额"]} className="w-[137px] text-[31px]" />
          <span className="ml-1 pb-1">58.91万</span>
          <span className="ml-10 flex items-center gap-2 pb-1">分时量:40216 <Up /></span>
        </div>
        <MinuteVolume />
        <div className="flex h-[63px] items-center justify-between px-3 pb-1 text-[41px] text-[#999]">
          <span>09:30</span>
          <span>15:00</span>
        </div>
        <div className="pointer-events-none absolute inset-y-0 left-[170px] w-px bg-[#666]" />
        <span className="absolute bottom-[6px] left-[106px] flex h-[54px] w-32 items-center justify-center rounded-lg border border-[#e8ebef] bg-[#f6f8fa] pb-1 text-[41px] text-[#555]">10:01</span>
      </section>
      <footer className="h-[7px] border-t border-[#d5d5d5] bg-[#f7f8fa]" />
    </main>
  );
};

export default App;
